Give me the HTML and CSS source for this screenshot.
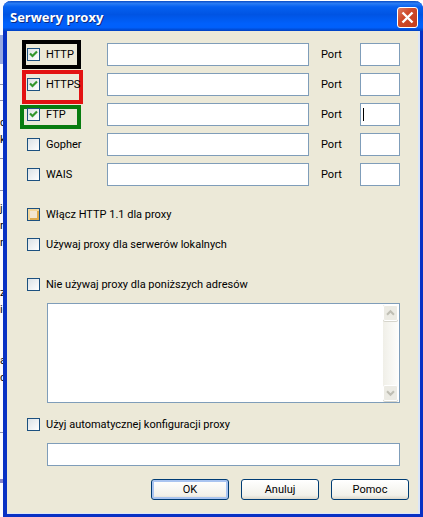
FILE: index.html
```html
<!DOCTYPE html>
<html lang="pl">
  <head>
    <meta charset="utf-8">
    <title>Serwery proxy</title>
    <link rel="stylesheet" href="styles.css">
  </head>
  <body>
    <div class="backdrop" aria-hidden="true">
      <span class="toolbar"></span>
      <span class="line line-1"></span>
      <span class="line line-2"></span>
      <span class="scrap scrap-1">c</span>
      <span class="scrap scrap-2">ki</span>
      <span class="line line-3"></span>
      <span class="line line-4"></span>
      <span class="scrap scrap-3">j</span>
      <span class="scrap scrap-4">r</span>
      <span class="scrap scrap-5">n</span>
      <span class="scrap scrap-6">z</span>
      <span class="scrap scrap-7">ie</span>
      <span class="scrap scrap-8">a</span>
      <span class="scrap scrap-9">d</span>
      <span class="line line-5"></span>
      <span class="line line-6"></span>
    </div>
    <form class="window">
      <div class="titlebar">
        <h1>Serwery proxy</h1>
        <button type="button" class="close" aria-label="Zamknij">
          <svg width="21" height="21" viewBox="0 0 21 21">
            <path d="M5.5 5.5L15.5 15.5M15.5 5.5L5.5 15.5" stroke="#fff" stroke-width="2.4" fill="none"/>
          </svg>
        </button>
      </div>
      <div class="content">
        <div class="servers">
          <div class="server">
            <label class="check mark mark-black"><input type="checkbox" checked>HTTP</label>
            <input type="text" class="field" aria-label="Adres HTTP">
            <label class="port" for="port_http">Port</label>
            <input type="text" class="field" id="port_http">
          </div>
          <div class="server">
            <label class="check mark mark-red"><input type="checkbox" checked>HTTPS</label>
            <input type="text" class="field" aria-label="Adres HTTPS">
            <label class="port" for="port_https">Port</label>
            <input type="text" class="field" id="port_https">
          </div>
          <div class="server">
            <label class="check mark mark-green"><input type="checkbox" checked>FTP</label>
            <input type="text" class="field" aria-label="Adres FTP">
            <label class="port" for="port_ftp">Port</label>
            <span class="caret"><input type="text" class="field" id="port_ftp"></span>
          </div>
          <div class="server">
            <label class="check"><input type="checkbox">Gopher</label>
            <input type="text" class="field" aria-label="Adres Gopher">
            <label class="port" for="port_gopher">Port</label>
            <input type="text" class="field" id="port_gopher">
          </div>
          <div class="server">
            <label class="check"><input type="checkbox">WAIS</label>
            <input type="text" class="field" aria-label="Adres WAIS">
            <label class="port" for="port_wais">Port</label>
            <input type="text" class="field" id="port_wais">
          </div>
        </div>
        <div class="options">
          <label class="check"><input type="checkbox" class="hot">Włącz HTTP 1.1 dla proxy</label>
          <label class="check"><input type="checkbox">Używaj proxy dla serwerów lokalnych</label>
        </div>
        <div class="group">
          <label class="check"><input type="checkbox">Nie używaj proxy dla poniższych adresów</label>
          <div class="list">
            <textarea aria-label="Adresy bez proxy"></textarea>
            <div class="scrollbar" aria-hidden="true">
              <svg width="15" height="16" viewBox="0 0 15 16"><path d="M3.5 10L7.5 6L11.5 10" /></svg>
              <svg width="15" height="16" viewBox="0 0 15 16"><path d="M3.5 6L7.5 10L11.5 6" /></svg>
            </div>
          </div>
        </div>
        <div class="group">
          <label class="check"><input type="checkbox">Użyj automatycznej konfiguracji proxy</label>
          <input type="text" class="field" aria-label="Adres konfiguracji proxy">
        </div>
        <div class="buttons">
          <button type="submit" class="button default">OK</button>
          <button type="button" class="button">Anuluj</button>
          <button type="button" class="button">Pomoc</button>
        </div>
      </div>
    </form>
  </body>
</html>
```

FILE: styles.css
```css
* {
  box-sizing: border-box;
}

body {
  margin: 0;
  background: #fff;
  color: #000;
  font-family: Roboto, sans-serif;
  font-size: 11px;
  line-height: 17px;
}

/* page that shows past the left edge of the dialog */
.backdrop {
  position: absolute;
  top: 0;
  left: 0;
  width: 12px;
  height: 100%;
  overflow: hidden;
  background: #fafaff;
}

.backdrop span {
  position: absolute;
}

.toolbar {
  top: 35px;
  width: 12px;
  height: 29px;
  background: #97a8e2;
}

.line {
  width: 12px;
  height: 1px;
  background: #8f93b0;
}

.line-1 { top: 84px; }
.line-2 { top: 100px; }
.line-3 { top: 158px; }
.line-4 { top: 190px; }
.line-5 { top: 432px; }
.line-6 { top: 479px; height: 4px; background: #8484cc; }

.scrap {
  left: 0;
}

.scrap-1 { top: 114px; }
.scrap-2 { top: 131px; }
.scrap-3 { top: 200px; }
.scrap-4 { top: 217px; }
.scrap-5 { top: 234px; }
.scrap-6 { top: 284px; }
.scrap-7 { top: 301px; }
.scrap-8 { top: 352px; }
.scrap-9 { top: 369px; }

.window {
  position: relative;
  margin: 1px 0 0 3px;
  border: solid #0831c4;
  border-width: 0 3px 3px 4px;
  border-radius: 8px 8px 0 0;
  background: #ece9d8;
}

.titlebar {
  display: flex;
  align-items: center;
  justify-content: space-between;
  height: 30px;
  margin: 0 -3px 0 -4px;
  padding: 2px 5px 0 7px;
  border-radius: 8px 8px 0 0;
  background: linear-gradient(#0a4cc4, #2a7cf4 8%, #0560f0 20%, #0054e3 45%, #0060fb 75%, #0060fc 88%, #0040c0);
}

h1 {
  margin: 0;
  color: #fff;
  font-family: "Open Sans", sans-serif;
  font-size: 13px;
  font-weight: bold;
  text-shadow: 1px 1px #0a2a80;
}

.close {
  width: 21px;
  height: 21px;
  padding: 0;
  border: 1px solid #fff;
  border-radius: 3px;
  background: linear-gradient(135deg, #dc7a62, #cf4a2a 40%, #c23c1c);
}

.close svg {
  display: block;
  margin: -1px;
}

.content {
  padding: 12px 18px 13px 20px;
  border: solid #dce6f8;
  border-width: 0 2px 1px 0;
}

.servers {
  display: grid;
  gap: 7px;
}

.server {
  display: grid;
  grid-template-columns: 80px 1fr 51px 40px;
  align-items: center;
}

.check {
  display: flex;
  align-items: center;
  gap: 6px;
  position: relative;
  height: 20px;
}

.check input {
  appearance: none;
  flex: none;
  width: 13px;
  height: 13px;
  margin: 0;
  border: 1px solid #1c5180;
  background: linear-gradient(135deg, #dce2e6, #fff);
}

.check input:checked {
  background: url("data:image/svg+xml,%3Csvg xmlns='http://www.w3.org/2000/svg' viewBox='0 0 11 11'%3E%3Cpath d='M2 4.5L4.5 7L9 2.5' fill='none' stroke='%2332962c' stroke-width='2.2'/%3E%3C/svg%3E"), linear-gradient(135deg, #dce2e6, #fff);
}

.check .hot {
  background: #f3e6d0;
  box-shadow: inset 1px 1px 0 1px #f3d79c, inset -1px -1px 0 1px #e0ac4c;
}

.mark {
  isolation: isolate;
}

.mark::after {
  content: "";
  position: absolute;
  z-index: -1;
  border: 4px solid;
}

.mark-black::after {
  inset: -5px 26px -4px -5px;
  border-color: #000;
}

.mark-red::after {
  inset: -5px 24px -9px -5px;
  border-color: #e31212;
}

.mark-green::after {
  inset: 0 26px -4px -7px;
  border-color: #087c10;
}

.port {
  padding-left: 12px;
}

.field {
  width: 100%;
  height: 23px;
  padding: 2px;
  border: 1px solid #7f9db9;
  background: #fff;
  font: inherit;
}

.caret {
  display: block;
  position: relative;
}

.caret::after {
  content: "";
  position: absolute;
  top: 5px;
  left: 3px;
  width: 1px;
  height: 13px;
  background: #000;
}

.options {
  display: grid;
  gap: 10px;
  margin: 18px 0 20px;
}

.group {
  display: grid;
  gap: 9px;
  margin-bottom: 11px;
}

.group:nth-last-child(2) {
  margin-bottom: 13px;
}

.list,
.group .field {
  width: auto;
  margin-left: 20px;
}

.list {
  display: flex;
  height: 100px;
  border: 1px solid #7f9db9;
  background: #fff;
}

textarea {
  flex: 1;
  min-width: 0;
  padding: 2px;
  border: none;
  background: none;
  font: inherit;
  resize: none;
}

.scrollbar {
  display: flex;
  flex-direction: column;
  justify-content: space-between;
  width: 15px;
  margin: 1px;
  background: linear-gradient(90deg, #f0efe8, #fdfdfb);
}

.scrollbar svg {
  border: 1px solid #fff;
  border-radius: 2px;
  background: #ecebe4;
  box-shadow: 0 1px #d6d5cc;
}

.scrollbar path {
  fill: none;
  stroke: #bfbeb4;
  stroke-width: 2.4;
}

.buttons {
  display: flex;
  justify-content: flex-end;
  gap: 12px;
  margin-right: -9px;
}

.button {
  width: 78px;
  height: 21px;
  padding: 0;
  border: 1px solid #003c74;
  border-radius: 3px;
  background: linear-gradient(#fff, #f2f1ea 80%, #dcd8cc);
  color: #000;
  font: inherit;
}

.default {
  box-shadow: inset 0 0 0 2px #a9c4f0;
}
```
